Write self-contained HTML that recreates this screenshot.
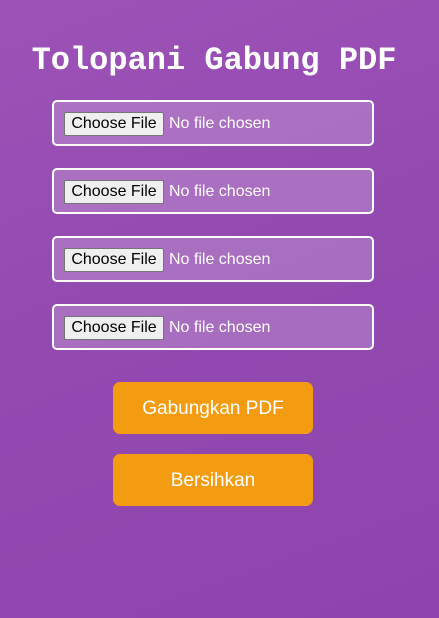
<!DOCTYPE html>
<html><head><style>
html,body{margin:0;padding:0;width:439px;height:618px;overflow:hidden}
body{background:linear-gradient(160deg,#9d52b7 0%,#9249b0 50%,#8e44ad 100%);font-family:"Liberation Sans",Arial,sans-serif;position:relative}
h1{position:absolute;left:0;width:428px;top:41px;margin:0;text-align:center;font-family:"Courier New","Liberation Mono",monospace;font-weight:bold;font-size:32px;color:#fff;line-height:40px;letter-spacing:0}
.box{position:absolute;left:52px;width:318px;height:42px;border:2px solid #fff;border-radius:5px;background:rgba(255,255,255,0.2)}
.btn{position:absolute;left:10px;top:10px;width:98px;height:22px;background:#efefef;border:1px solid #767676;border-radius:2px;font-size:16px;line-height:22px;text-align:center;color:#000}
.nf{position:absolute;left:115px;top:11px;font-size:16px;line-height:22px;color:#fff}
.ob{position:absolute;left:113px;width:200px;height:52px;background:#f39c12;border-radius:7px;color:#fff;font-size:19px;line-height:54px;text-align:center}
</style></head><body>
<h1>Tolopani Gabung PDF</h1>
<div class="box" style="top:100px"><div class="btn">Choose File</div><div class="nf">No file chosen</div></div>
<div class="box" style="top:168px"><div class="btn">Choose File</div><div class="nf">No file chosen</div></div>
<div class="box" style="top:236px"><div class="btn">Choose File</div><div class="nf">No file chosen</div></div>
<div class="box" style="top:304px"><div class="btn">Choose File</div><div class="nf">No file chosen</div></div>
<div class="ob" style="top:382px">Gabungkan PDF</div>
<div class="ob" style="top:454px">Bersihkan</div>
</body></html>
